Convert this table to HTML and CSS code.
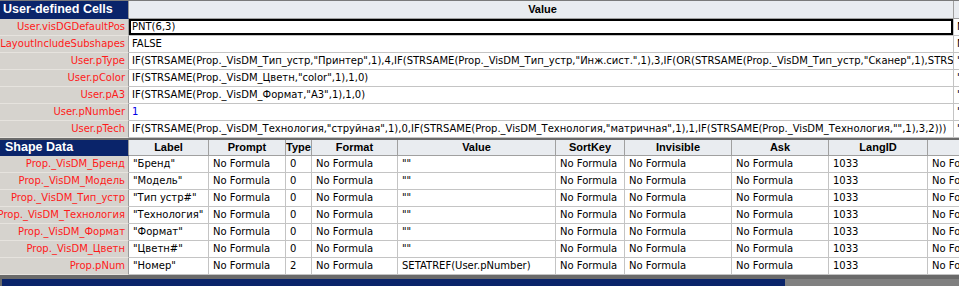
FILE: index.html
```html
<!DOCTYPE html>
<html>
<head>
<meta charset="utf-8">
<link rel="stylesheet" href="styles.css">
</head>
<body>
<div class="sheet">
  <section class="sect udc">
    <div class="row head">
      <div class="c name title"><span>User-defined Cells</span></div>
      <div class="c colhead">Value</div>
      <div class="c colhead"></div>
    </div>
    <div class="row">
      <div class="c name"><span>User.visDGDefaultPos</span></div>
      <div class="c selected">PNT(6,3)</div>
      <div class="c">No Formula</div>
    </div>
    <div class="row">
      <div class="c name"><span>User.msvLayoutIncludeSubshapes</span></div>
      <div class="c">FALSE</div>
      <div class="c">No Formula</div>
    </div>
    <div class="row">
      <div class="c name"><span>User.pType</span></div>
      <div class="c">IF(STRSAME(Prop._VisDM_Тип_устр,"Принтер",1),4,IF(STRSAME(Prop._VisDM_Тип_устр,"Инж.сист.",1),3,IF(OR(STRSAME(Prop._VisDM_Тип_устр,"Сканер",1),STRSAME(Prop._VisDM_Тип_устр,"МФУ",1)),2,1)))</div>
      <div class="c">""</div>
    </div>
    <div class="row">
      <div class="c name"><span>User.pColor</span></div>
      <div class="c">IF(STRSAME(Prop._VisDM_Цветн,"color",1),1,0)</div>
      <div class="c">""</div>
    </div>
    <div class="row">
      <div class="c name"><span>User.pA3</span></div>
      <div class="c">IF(STRSAME(Prop._VisDM_Формат,"A3",1),1,0)</div>
      <div class="c">""</div>
    </div>
    <div class="row">
      <div class="c name"><span>User.pNumber</span></div>
      <div class="c num">1</div>
      <div class="c">""</div>
    </div>
    <div class="row">
      <div class="c name"><span>User.pTech</span></div>
      <div class="c">IF(STRSAME(Prop._VisDM_Технология,"струйная",1),0,IF(STRSAME(Prop._VisDM_Технология,"матричная",1),1,IF(STRSAME(Prop._VisDM_Технология,"",1),3,2)))</div>
      <div class="c">""</div>
    </div>
  </section>

  <section class="sect sd">
    <div class="row head">
      <div class="c name title"><span>Shape Data</span></div>
      <div class="c colhead">Label</div>
      <div class="c colhead">Prompt</div>
      <div class="c colhead">Type</div>
      <div class="c colhead">Format</div>
      <div class="c colhead">Value</div>
      <div class="c colhead">SortKey</div>
      <div class="c colhead">Invisible</div>
      <div class="c colhead">Ask</div>
      <div class="c colhead">LangID</div>
      <div class="c colhead">Calendar</div>
    </div>
    <div class="row">
      <div class="c name"><span>Prop._VisDM_Бренд</span></div>
      <div class="c">"Бренд"</div>
      <div class="c">No Formula</div>
      <div class="c">0</div>
      <div class="c">No Formula</div>
      <div class="c">""</div>
      <div class="c">No Formula</div>
      <div class="c">No Formula</div>
      <div class="c">No Formula</div>
      <div class="c">1033</div>
      <div class="c">No Formula</div>
    </div>
    <div class="row">
      <div class="c name"><span>Prop._VisDM_Модель</span></div>
      <div class="c">"Модель"</div>
      <div class="c">No Formula</div>
      <div class="c">0</div>
      <div class="c">No Formula</div>
      <div class="c">""</div>
      <div class="c">No Formula</div>
      <div class="c">No Formula</div>
      <div class="c">No Formula</div>
      <div class="c">1033</div>
      <div class="c">No Formula</div>
    </div>
    <div class="row">
      <div class="c name"><span>Prop._VisDM_Тип_устр</span></div>
      <div class="c">"Тип устр#"</div>
      <div class="c">No Formula</div>
      <div class="c">0</div>
      <div class="c">No Formula</div>
      <div class="c">""</div>
      <div class="c">No Formula</div>
      <div class="c">No Formula</div>
      <div class="c">No Formula</div>
      <div class="c">1033</div>
      <div class="c">No Formula</div>
    </div>
    <div class="row">
      <div class="c name"><span>Prop._VisDM_Технология</span></div>
      <div class="c">"Технология"</div>
      <div class="c">No Formula</div>
      <div class="c">0</div>
      <div class="c">No Formula</div>
      <div class="c">""</div>
      <div class="c">No Formula</div>
      <div class="c">No Formula</div>
      <div class="c">No Formula</div>
      <div class="c">1033</div>
      <div class="c">No Formula</div>
    </div>
    <div class="row">
      <div class="c name"><span>Prop._VisDM_Формат</span></div>
      <div class="c">"Формат"</div>
      <div class="c">No Formula</div>
      <div class="c">0</div>
      <div class="c">No Formula</div>
      <div class="c">""</div>
      <div class="c">No Formula</div>
      <div class="c">No Formula</div>
      <div class="c">No Formula</div>
      <div class="c">1033</div>
      <div class="c">No Formula</div>
    </div>
    <div class="row">
      <div class="c name"><span>Prop._VisDM_Цветн</span></div>
      <div class="c">"Цветн#"</div>
      <div class="c">No Formula</div>
      <div class="c">0</div>
      <div class="c">No Formula</div>
      <div class="c">""</div>
      <div class="c">No Formula</div>
      <div class="c">No Formula</div>
      <div class="c">No Formula</div>
      <div class="c">1033</div>
      <div class="c">No Formula</div>
    </div>
    <div class="row">
      <div class="c name"><span>Prop.pNum</span></div>
      <div class="c">"Номер"</div>
      <div class="c">No Formula</div>
      <div class="c">2</div>
      <div class="c">No Formula</div>
      <div class="c">SETATREF(User.pNumber)</div>
      <div class="c">No Formula</div>
      <div class="c">No Formula</div>
      <div class="c">No Formula</div>
      <div class="c">1033</div>
      <div class="c">No Formula</div>
    </div>
  </section>

  <div class="hscroll">
    <div class="thumb"></div>
    <div class="track"></div>
  </div>
</div>
</body>
</html>
```

FILE: styles.css
```css
html, body {
  margin: 0;
  padding: 0;
  background: #ffffff;
}

.sheet {
  width: 959px;
  height: 286px;
  overflow: hidden;
  display: flex;
  flex-direction: column;
  font-family: "DejaVu Sans", sans-serif;
  font-size: 10px;
  color: #000000;
}

.sect {
  flex: none;
  overflow: hidden;
}

.udc {
  border-top: 1px solid #7a7a7a;
  border-bottom: 2px solid #6b6b6b;
}

.udc .row {
  grid-template-columns: 129px 825px 120px;
}

.sd .row {
  grid-template-columns: 129px 80px 77px 26px 86px 158px 69px 107px 97px 99px 120px;
}

.row {
  display: grid;
  height: 17px;
}

.udc .head {
  height: 18px;
}

.sd .head {
  height: 16px;
}

.c {
  box-sizing: border-box;
  border-right: 1px solid #c4c4c4;
  border-bottom: 1px solid #c4c4c4;
  padding: 0 3px 0 4px;
  white-space: nowrap;
  overflow: hidden;
  line-height: 16px;
  background: #ffffff;
}

.udc .c {
  padding-left: 3px;
}

.name {
  display: flex;
  justify-content: flex-end;
  background: #d6d3ce;
  color: #ff1a1a;
  border-right-color: #9a9a9a;
  border-bottom-color: #e6e3de;
  padding: 0 3px 0 0;
}

.name span {
  flex: none;
}

.title {
  justify-content: flex-start;
  background: #0a246a;
  color: #ffffff;
  font-family: "Liberation Sans", Arial, sans-serif;
  font-weight: bold;
  font-size: 12.5px;
  padding-left: 5px;
  border-bottom-color: #0a246a;
}

.colhead {
  background: #e9ecf0;
  text-align: center;
  font-family: "Liberation Sans", Arial, sans-serif;
  font-weight: bold;
  font-size: 11px;
  padding: 0;
  border-right-color: #a0a0a0;
  border-bottom-color: #a0a0a0;
}

.udc .head .c {
  line-height: 17px;
}

.sd .head .c {
  line-height: 15px;
}

.selected {
  box-shadow: inset 0 0 0 2px #000000;
}

.num {
  color: #0000e6;
}

.hscroll {
  flex: 1;
  display: flex;
  background: #6a6a6a;
  padding-top: 4px;
}

.thumb {
  width: 783px;
  margin-left: 2px;
  background: #0a246a;
}

.track {
  flex: 1;
  background: #808080;
}
```
